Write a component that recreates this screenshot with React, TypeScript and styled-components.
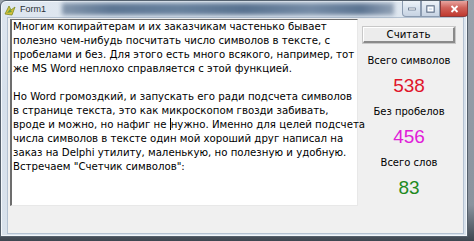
import React from "react";
import styled, { createGlobalStyle } from "styled-components";

const Global = createGlobalStyle`
  html, body { margin: 0; padding: 0; }
  body {
    width: 474px; height: 241px; overflow: hidden;
    background: linear-gradient(180deg, #9aa3ad 0%, #8a939e 85%, #3e4650 100%);
    font-family: "DejaVu Sans", Verdana, sans-serif;
  }
`;

const Window = styled.div`
  box-sizing: border-box;
  width: 468px;
  height: 237px;
  border: 1px solid #55606c;
  border-radius: 6px 6px 0 0;
  background: linear-gradient(180deg, #dfe7f0 0%, #d6e0eb 40%, #d9e2ec 100%);
  box-shadow: inset 0 0 0 1px #f4f8fc;
  display: flex;
  flex-direction: column;
`;

const TitleBar = styled.div`
  height: 17px;
  display: flex;
  align-items: flex-start;
  padding-left: 3px;
`;

const AppIcon = styled.svg`
  width: 12px;
  height: 12px;
  margin-top: 3px;
  flex: none;
`;

const Title = styled.span`
  font-family: "Liberation Sans", Arial, sans-serif;
  font-size: 9px;
  line-height: 17px;
  color: #2a2f36;
  margin-left: 4px;
  flex: none;
`;

const Glass = styled.div`
  flex: 1;
  height: 12px;
  margin: 2px 8px 0 16px;
  background: linear-gradient(90deg, #7b8fa6 0%, #4f6a8a 15%, #5c7795 35%, #4b6686 55%, #6a829e 75%, #4e6888 90%, #8a9bb0 100%);
  filter: blur(2px);
  opacity: 0.9;
`;

const Caption = styled.div`
  display: flex;
  flex: none;
  margin-right: -1px;
`;

const CapButton = styled.div<{ $close?: boolean; $w: number }>`
  box-sizing: border-box;
  width: ${(p) => p.$w}px;
  height: 16px;
  border: 1px solid ${(p) => (p.$close ? "#8a3a3a" : "#8b9bb0")};
  border-top: none;
  background: ${(p) =>
    p.$close
      ? "linear-gradient(180deg, #e8a5a0 0%, #d0625a 45%, #c0392f 100%)"
      : "linear-gradient(180deg, #eef3f8 0%, #d8e2ee 50%, #c7d3e2 100%)"};
  border-radius: ${(p) => (p.$close ? "0 0 4px 0" : "0")};
  display: flex;
  align-items: center;
  justify-content: center;
  &:first-child { border-radius: 0 0 0 4px; }
`;

const Client = styled.div`
  flex: 1;
  margin: 0 4px 3px 7px;
  background: #f0f0f0;
  display: flex;
  padding: 1px 0 0 2px;
  box-shadow: 0 0 0 1px #b4c2d2;
`;

const Memo = styled.div`
  box-sizing: border-box;
  width: 348px;
  height: 187px;
  background: #ffffff;
  border-top: 1px solid #6d6d6d;
  border-left: 2px solid #6d6d6d;
  border-right: 1px solid #e8e8e8;
  border-bottom: 1px solid #e8e8e8;
  padding: 0 0 0 1px;
  font-size: 10.2px;
  color: #000;
`;

const Line = styled.div`
  height: 14px;
  line-height: 14px;
  white-space: nowrap;
`;

const Caret = styled.span`
  display: inline-block;
  width: 1px;
  height: 12px;
  background: #000;
  vertical-align: -2px;
`;

const Side = styled.div`
  flex: 1;
  display: flex;
  flex-direction: column;
  align-items: center;
  padding: 8px 3px 0 0;
`;

const Button = styled.div`
  box-sizing: border-box;
  width: 92px;
  height: 16px;
  background: #ececec;
  border-top: 1px solid #ffffff;
  border-left: 1px solid #ffffff;
  border-right: 2px solid #8a8a8a;
  border-bottom: 2px solid #8a8a8a;
  box-shadow: 0 0 0 1px #c8c8c8;
  font-size: 10.2px;
  line-height: 13px;
  text-align: center;
  color: #000;
`;

const Label = styled.div<{ $first?: boolean }>`
  margin-top: ${(p) => (p.$first ? 11 : 8)}px;
  font-size: 10px;
  line-height: 14px;
  color: #000;
`;

const Value = styled.div<{ $color: string }>`
  margin-top: 7px;
  font-family: "Liberation Sans", Arial, sans-serif;
  font-size: 19px;
  line-height: 22px;
  color: ${(p) => p.$color};
`;

const lines = [
  "Многим копирайтерам и их заказчикам частенько бывает",
  "полезно чем-нибудь посчитать число символов в тексте, с",
  "пробелами и без. Для этого есть много всякого, например, тот",
  "же MS Word неплохо справляется с этой функцией.",
  "",
  "Но Word громоздкий, и запускать его ради подсчета символов",
  "в странице текста, это как микроскопом гвозди забивать,",
  "CARET",
  "числа символов в тексте один мой хороший друг написал на",
  "заказ на Delphi утилиту, маленькую, но полезную и удобную.",
  "Встречаем \"Счетчик символов\":",
];

export default function App() {
  return (
    <>
      <Global />
      <Window>
        <TitleBar>
          <AppIcon viewBox="0 0 12 12">
            <path d="M1 10 L5 2 L7 6 L11 3 L8 11 Z" fill="#d8c23a" stroke="#7a8a20" strokeWidth="0.8" />
            <path d="M3 9 L6 5 L8 8 Z" fill="#6aa040" />
          </AppIcon>
          <Title>Form1</Title>
          <Glass />
          <Caption>
            <CapButton $w={19}>
              <svg width="8" height="4" viewBox="0 0 8 4"><rect x="0.5" y="1" width="7" height="2" fill="#fff" stroke="#5a6a80" strokeWidth="0.7" /></svg>
            </CapButton>
            <CapButton $w={19}>
              <svg width="9" height="8" viewBox="0 0 9 8"><rect x="0.8" y="0.8" width="7.4" height="6.4" fill="none" stroke="#5a6a80" strokeWidth="1" /><rect x="2.3" y="2.6" width="4.4" height="3" fill="none" stroke="#fff" strokeWidth="1" /></svg>
            </CapButton>
            <CapButton $w={28} $close>
              <svg width="9" height="8" viewBox="0 0 9 8"><path d="M1.5 1 L7.5 7 M7.5 1 L1.5 7" stroke="#fff" strokeWidth="1.8" /></svg>
            </CapButton>
          </Caption>
        </TitleBar>
        <Client>
          <Memo>
            {lines.map((l, i) =>
              l === "CARET" ? (
                <Line key={i}>
                  вроде и можно, но нафиг не <Caret />нужно. Именно для целей подсчета
                </Line>
              ) : (
                <Line key={i}>{l || "\u00a0"}</Line>
              )
            )}
          </Memo>
          <Side>
            <Button>Считать</Button>
            <Label $first>Всего символов</Label>
            <Value $color="#e0152a">538</Value>
            <Label>Без пробелов</Label>
            <Value $color="#e020d8">456</Value>
            <Label>Всего слов</Label>
            <Value $color="#1f8a1f">83</Value>
          </Side>
        </Client>
      </Window>
    </>
  );
}
